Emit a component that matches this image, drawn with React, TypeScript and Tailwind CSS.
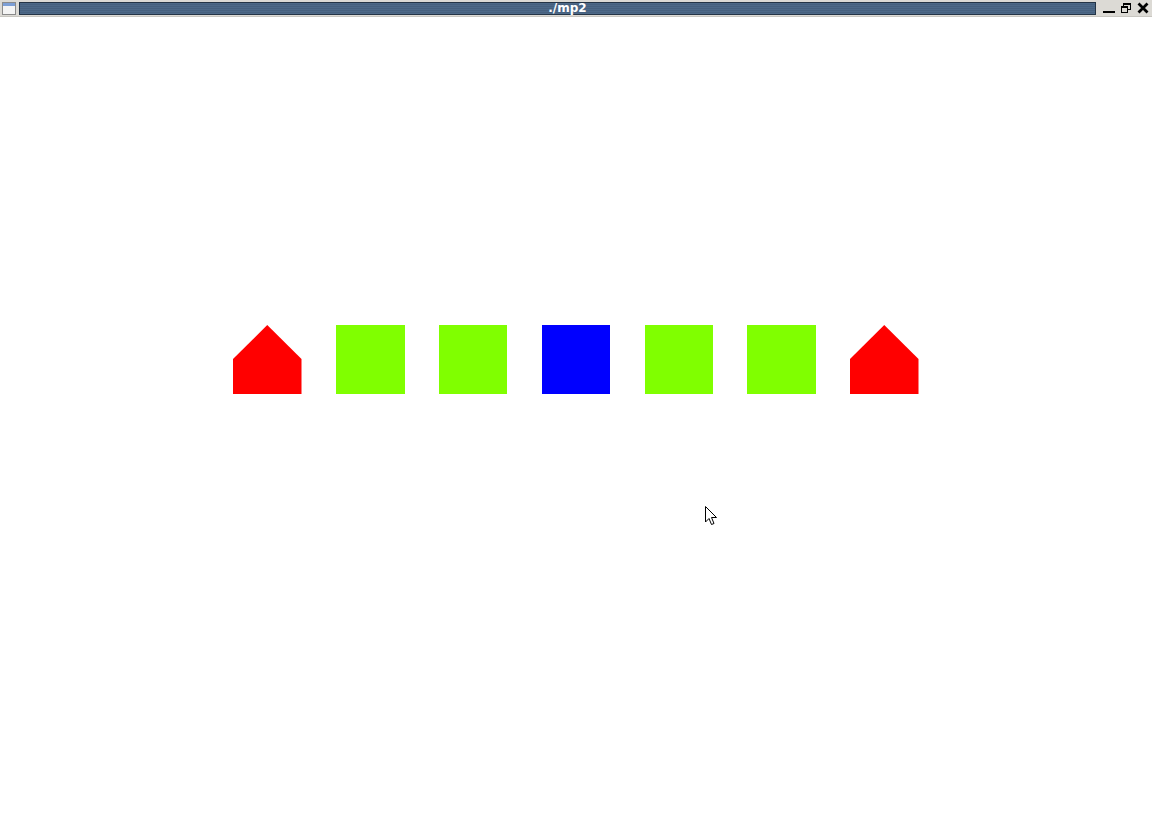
import React from 'react';

const House = () => (
  <svg width="68.5" height="69" viewBox="0 0 68.5 69" className="block">
    <polygon points="0,34 34.25,0 68.5,34 68.5,69 0,69" fill="#ff0000" />
  </svg>
);

const Square = ({ color }: { color: string }) => (
  <div className={`w-[68.5px] h-[69px] ${color}`} />
);

const TitleBar = () => (
  <div className="h-[17px] bg-[#dcdad5] flex items-center px-[2px] gap-[3px] border-b border-[#c8c6c0]">
    <svg width="14" height="13" viewBox="0 0 14 13" className="shrink-0">
      <rect x="0.5" y="0.5" width="13" height="12" fill="#f4f4f4" stroke="#8a8a8a" />
      <rect x="1" y="1" width="12" height="3" fill="#7d9fd6" />
    </svg>
    <div className="flex-1 h-[13px] border border-[#243446] bg-[repeating-linear-gradient(to_bottom,#4d6988_0px,#4d6988_1px,#46607e_1px,#46607e_2px)] flex items-center justify-center">
      <span className="pl-[20px] text-white text-[12px] font-bold leading-none font-['DejaVu_Sans',sans-serif]">./mp2</span>
    </div>
    <div className="flex items-center gap-[5px] pl-[4px] pr-[1px] shrink-0">
      <svg width="12" height="12" viewBox="0 0 12 12">
        <rect x="0" y="9" width="12" height="2" fill="#000" />
      </svg>
      <svg width="12" height="12" viewBox="0 0 12 12">
        <rect x="3.5" y="1.5" width="7" height="6" fill="none" stroke="#000" />
        <rect x="3" y="1" width="8" height="2" fill="#000" />
        <rect x="1.5" y="4.5" width="6" height="6" fill="#dcdad5" stroke="#000" />
        <rect x="1" y="4" width="7" height="2" fill="#000" />
      </svg>
      <svg width="12" height="12" viewBox="0 0 12 12">
        <path d="M1.5 1.5 L10.5 10.5 M10.5 1.5 L1.5 10.5" stroke="#000" strokeWidth="2.8" />
      </svg>
    </div>
  </div>
);

export default function App() {
  return (
    <div className="w-[1152px] h-[839px] bg-white flex flex-col overflow-hidden">
      <TitleBar />
      <div className="flex-1 relative">
        <div className="pt-[308px] flex justify-center gap-[34.3px]">
          <House />
          <Square color="bg-[#80ff00]" />
          <Square color="bg-[#80ff00]" />
          <Square color="bg-[#0000ff]" />
          <Square color="bg-[#80ff00]" />
          <Square color="bg-[#80ff00]" />
          <House />
        </div>
        <svg width="14" height="22" viewBox="0 0 14 22" className="absolute left-[705px] top-[489px]">
          <path d="M0.5 0.5 L0.5 16 L4 12.5 L6.5 18.5 L9 17.5 L6.5 11.5 L11.5 11.5 Z" fill="#fff" stroke="#000" strokeWidth="1" />
        </svg>
      </div>
    </div>
  );
}
